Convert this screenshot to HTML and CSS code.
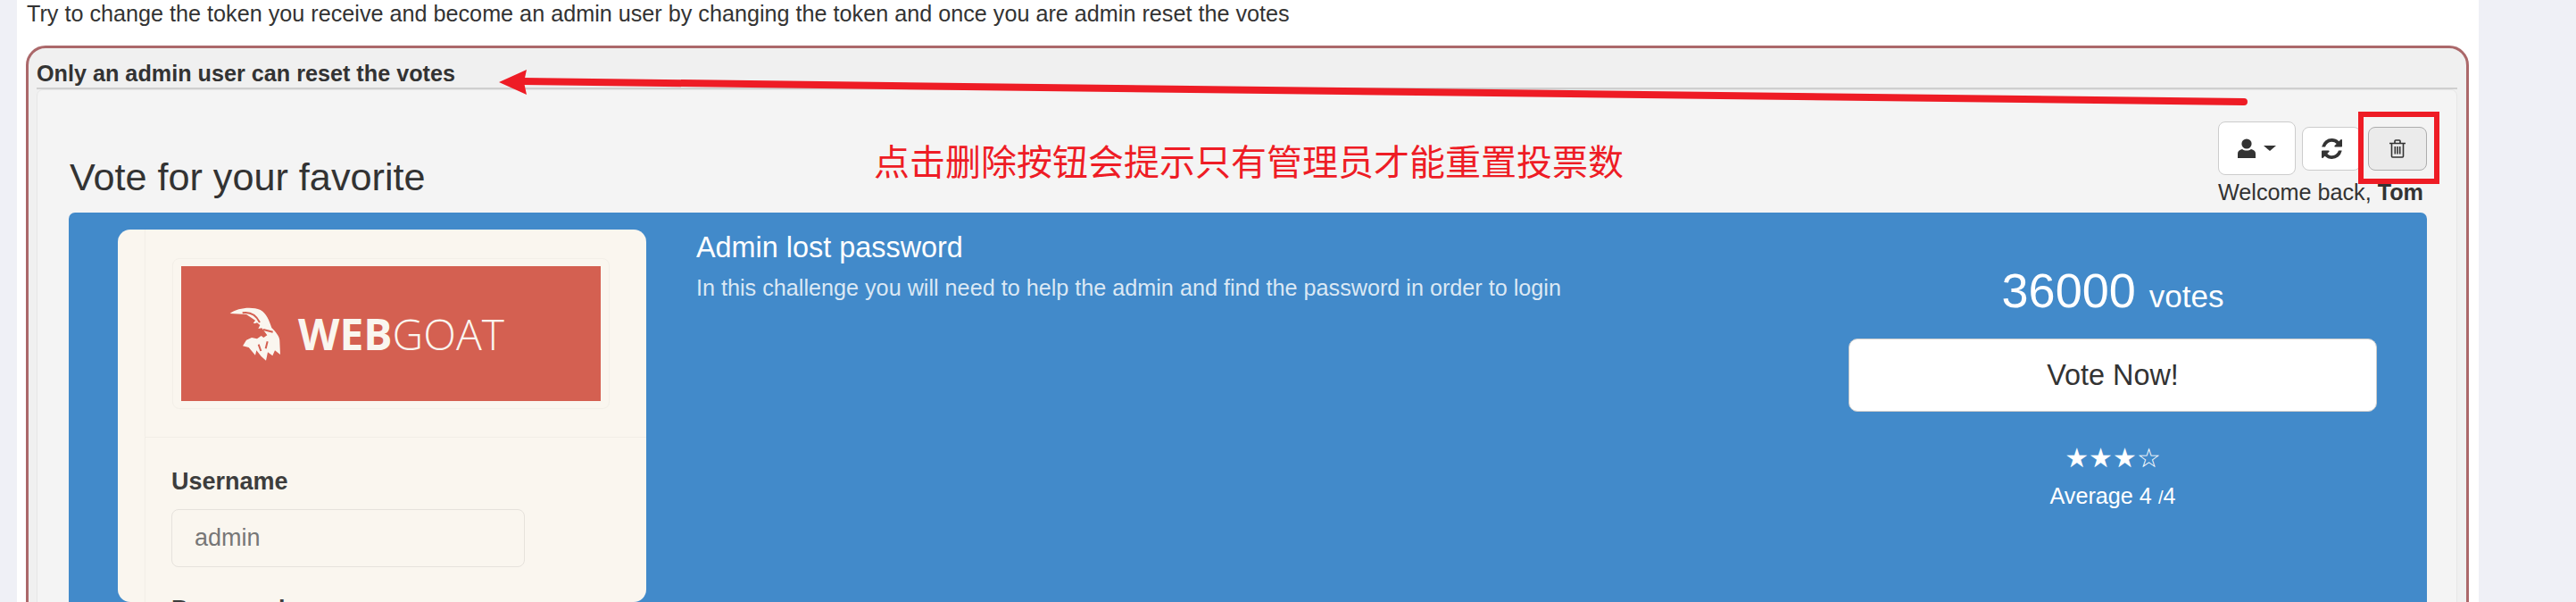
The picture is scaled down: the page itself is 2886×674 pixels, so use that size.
FILE: index.html
```html
<!DOCTYPE html>
<html lang="en">
<head>
    <meta charset="UTF-8">
    <title>Vote for your favorite</title>
    <link rel="stylesheet" href="styles.css">
</head>
<body>
    <div class="page">
        <p class="intro">Try to change the token you receive and become an admin user by changing the token and once you are admin reset the votes</p>

        <div class="attack-box">
            <div class="feedback">Only an admin user can reset the votes</div>

            <div class="panel">
                <!-- Title and user buttons -->
                <div class="panel-head">
                    <h3>Vote for your favorite</h3>
                    <div class="user-area">
                        <div class="btn-row">
                            <button class="btn btn-user" type="button">
                                <svg class="icon-user" viewBox="0 0 20 22"><circle cx="10" cy="6" r="5.6"/><path d="M0 22v-5c0-3 2-4 5-5 1.500 1 3 1.600 5 1.600s3.500-.6 5-1.600c3 1 5 2 5 5v5z"/></svg>
                                <span class="caret"></span>
                            </button>
                            <button class="btn btn-small" type="button">
                                <svg class="icon-refresh" viewBox="0 0 1536 1536"><path d="M1511 928q0 5-1 7-64 268-268 434.500t-478 166.500q-146 0-282.500-55t-243.500-157l-129 129q-19 19-45 19t-45-19-19-45v-448q0-26 19-45t45-19h448q26 0 45 19t19 45-19 45l-137 137q71 66 161 102t187 36q134 0 250-65t186-179q11-17 53-117 8-23 30-23h192q13 0 22.500 9.500t9.500 22.500zm25-800v448q0 26-19 45t-45 19h-448q-26 0-45-19t-19-45 19-45l138-138q-148-137-349-137-134 0-250 65t-186 179q-11 17-53 117-8 23-30 23h-199q-13 0-22.500-9.500t-9.500-22.500v-7q65-268 270-434.500t480-166.500q146 0 284 55.500t245 156.500l130-129q19-19 45-19t45 19 19 45z"/></svg>
                            </button>
                            <button class="btn btn-small btn-active" type="button">
                                <svg class="icon-trash" viewBox="0 0 18 21"><path d="M0 4.500h18M6 4.500V2a1 1 0 0 1 1-1h4a1 1 0 0 1 1 1v2.500M2.500 4.500V19a1 1 0 0 0 1 1h11a1 1 0 0 0 1-1V4.500M6.300 8v8.500M9 8v8.500M11.700 8v8.500"/></svg>
                            </button>
                        </div>
                        <div class="welcome">Welcome back, <b>Tom</b></div>
                    </div>
                </div>

                <!-- Challenge row -->
                <div class="challenge">
                    <div class="card">
                        <div class="card-inner">
                            <div class="logo-frame">
                                <div class="logo">
                                    <svg class="goat" viewBox="0 0 225 210">
                                        <path class="goat-fill" d="M20 36C45 16 95 12 122 24c20 10 30 36 38 60 14 14 28 30 27 46l2 44-18-14-8 18-16-12-6 28-16-14-16-20-4 16-22-26-20-5 12-20 18-8 18 4 14-10 8 6 12-8-18-24-12 2 6-12-10-8-16 6 10-14-30-20z"/>
                                        <path class="goat-cut" d="M62 34c26-4 46 8 58 32M92 68l16 8M132 90l32 8M116 140l8 22M146 130l-6 24"/>
                                    </svg>
                                    <span class="logo-text"><b>WEB</b>GOAT</span>
                                </div>
                            </div>
                            <div class="login-form">
                                <label for="loginName">Username</label>
                                <input class="login-input" id="loginName" type="text" value="admin" readonly>
                                <label for="loginPass">Password</label>
                            </div>
                        </div>
                    </div>

                    <div class="challenge-text">
                        <h4>Admin lost password</h4>
                        <p>In this challenge you will need to help the admin and find the password in order to login</p>
                    </div>

                    <div class="vote-col">
                        <div class="vote-count">36000 <small>votes</small></div>
                        <button class="vote-btn" type="button">Vote Now!</button>
                        <div class="stars">★★★☆</div>
                        <div class="average">Average 4 <small>/</small>4</div>
                    </div>
                </div>
            </div>
        </div>
    </div>

    <!-- Annotations drawn on top of the screenshot -->
    <div class="note">点击删除按钮会提示只有管理员才能重置投票数</div>
    <svg class="marks" viewBox="0 0 2886 674">
        <path class="mark-line" d="M585 91L2514 114"/>
        <path class="mark-head" d="M559 92L590 78L587 92L590 106z"/>
        <rect class="mark-box" x="2645" y="128" width="85" height="75"/>
    </svg>
</body>
</html>
```

FILE: styles.css
```css
* {
    margin: 0;
    padding: 0;
    box-sizing: border-box;
}

body {
    position: relative;
    width: 2886px;
    height: 674px;
    overflow: hidden;
    background-color: #eff0f6;
    color: #333;
    font-family: "Liberation Sans", Arial, sans-serif;
    font-size: 25.2px;
}

.page {
    width: 2758px;
    height: 674px;
    margin-left: 19px;
    background: white;
    overflow: hidden;
}

.intro {
    padding-left: 11px;
    line-height: 30px;
}

.attack-box {
    height: 700px;
    margin: 21px 11px 0 10px;
    padding: 0 10px 0 9px;
    background-color: #f0f0f0;
    border: 3px solid #ab686a;
    border-radius: 22px 22px 0 0;
}

.feedback {
    height: 46px;
    padding-top: 12px;
    line-height: 32px;
    font-weight: bold;
    border-bottom: 2px solid #cfcfcf;
}

.panel {
    height: 620px;
    padding: 0 33px 0 35px;
    background-color: #f4f4f4;
    border: 1px solid #e6e6e6;
    border-radius: 7px 7px 0 0;
}

.panel-head {
    display: flex;
    justify-content: space-between;
    align-items: flex-end;
    height: 137px;
}

.panel-head h3 {
    font-size: 43.2px;
    font-weight: normal;
    line-height: 50px;
    padding: 0 0 15px 1px;
}

.user-area {
    width: 234px;
    height: 102px;
}

.btn-row {
    display: flex;
    align-items: center;
    height: 60px;
}

.btn {
    display: flex;
    align-items: center;
    justify-content: center;
    background: white;
    border: 1px solid #ccc;
    border-radius: 8px;
}

.btn-user {
    width: 87px;
    height: 60px;
    margin-right: 7px;
    gap: 9px;
}

.btn-small {
    width: 66px;
    height: 49px;
    margin-right: 8px;
}

.btn-active {
    margin-right: 0;
    background-color: #ebebeb;
    border-color: #adadad;
}

.icon-user {
    width: 20px;
    height: 22px;
    fill: #333;
}

.caret {
    border-top: 6px solid #333;
    border-left: 7px solid transparent;
    border-right: 7px solid transparent;
}

.icon-refresh {
    width: 23px;
    height: 23px;
    fill: #333;
}

.icon-trash {
    width: 18px;
    height: 21px;
    fill: none;
    stroke: #333;
    stroke-width: 1.6;
}

.welcome {
    line-height: 38px;
    white-space: nowrap;
}

.challenge {
    display: grid;
    grid-template-columns: 592px 1fr 592px;
    column-gap: 56px;
    height: 500px;
    padding: 19px 56px 0 55px;
    background-color: #428aca;
    border-radius: 7px 7px 0 0;
    color: white;
}

.card {
    height: 417px;
    padding-left: 30px;
    background-color: #faf6ef;
    border-radius: 14px;
    color: #333;
}

.card-inner {
    height: 100%;
    padding-top: 32px;
    border-left: 1px solid #f2eee7;
}

.logo-frame {
    width: 490px;
    height: 169px;
    margin-left: 30px;
    padding: 8px 9px;
    border: 1px solid #f3efe8;
    border-radius: 8px;
}

.logo {
    display: flex;
    align-items: center;
    gap: 8px;
    height: 100%;
    padding-left: 48px;
    background-color: #d46051;
}

.goat {
    width: 75px;
    height: 70px;
}

.goat-fill {
    fill: #faf6ef;
}

.goat-cut {
    fill: none;
    stroke: #d46051;
    stroke-width: 6;
}

.logo-text {
    font-family: "Open Sans", sans-serif;
    font-size: 48px;
    font-weight: 300;
    color: #faf6ef;
}

.logo-text b {
    font-weight: 700;
}

.login-form {
    margin-top: 31px;
    padding: 34px 0 0 29px;
    border-top: 1px solid #f2eee7;
}

.login-form label {
    display: block;
    font-size: 27px;
    font-weight: bold;
    line-height: 30px;
    color: #3d3d3d;
}

.login-input {
    display: block;
    width: 396px;
    height: 65px;
    margin: 16px 0 32px;
    padding-left: 25px;
    background: transparent;
    border: 1px solid #e6e2dc;
    border-radius: 8px;
    color: #777;
    font-family: "Liberation Sans", Arial, sans-serif;
    font-size: 27px;
}

.challenge-text h4 {
    font-size: 32.4px;
    font-weight: normal;
    line-height: 40px;
}

.challenge-text p {
    margin-top: 7px;
    line-height: 36px;
    color: #dbe8f4;
}

.vote-col {
    text-align: center;
}

.vote-count {
    margin-top: 38px;
    font-size: 54px;
    line-height: 60px;
}

.vote-count small {
    font-size: 35px;
}

.vote-btn {
    display: block;
    width: 592px;
    height: 82px;
    margin-top: 17px;
    background: white;
    border: 1px solid #ccc;
    border-radius: 10px;
    color: #333;
    font-family: "Liberation Sans", Arial, sans-serif;
    font-size: 32.4px;
}

.stars {
    margin-top: 32px;
    font-family: "DejaVu Sans", sans-serif;
    font-size: 30px;
    line-height: 40px;
}

.average {
    margin-top: 7px;
    line-height: 30px;
}

.average small {
    font-size: 20px;
}

/* annotations */
.note {
    position: absolute;
    left: 979px;
    top: 156px;
    color: #ee1c25;
    font-family: "Noto Sans CJK SC", sans-serif;
    font-size: 40px;
    line-height: 46px;
    white-space: nowrap;
}

.marks {
    position: absolute;
    left: 0;
    top: 0;
    width: 2886px;
    height: 674px;
    pointer-events: none;
}

.mark-line {
    fill: none;
    stroke: #ee1c25;
    stroke-width: 8;
    stroke-linecap: round;
}

.mark-head {
    fill: #ee1c25;
}

.mark-box {
    fill: none;
    stroke: #ee1c25;
    stroke-width: 6;
}
```
